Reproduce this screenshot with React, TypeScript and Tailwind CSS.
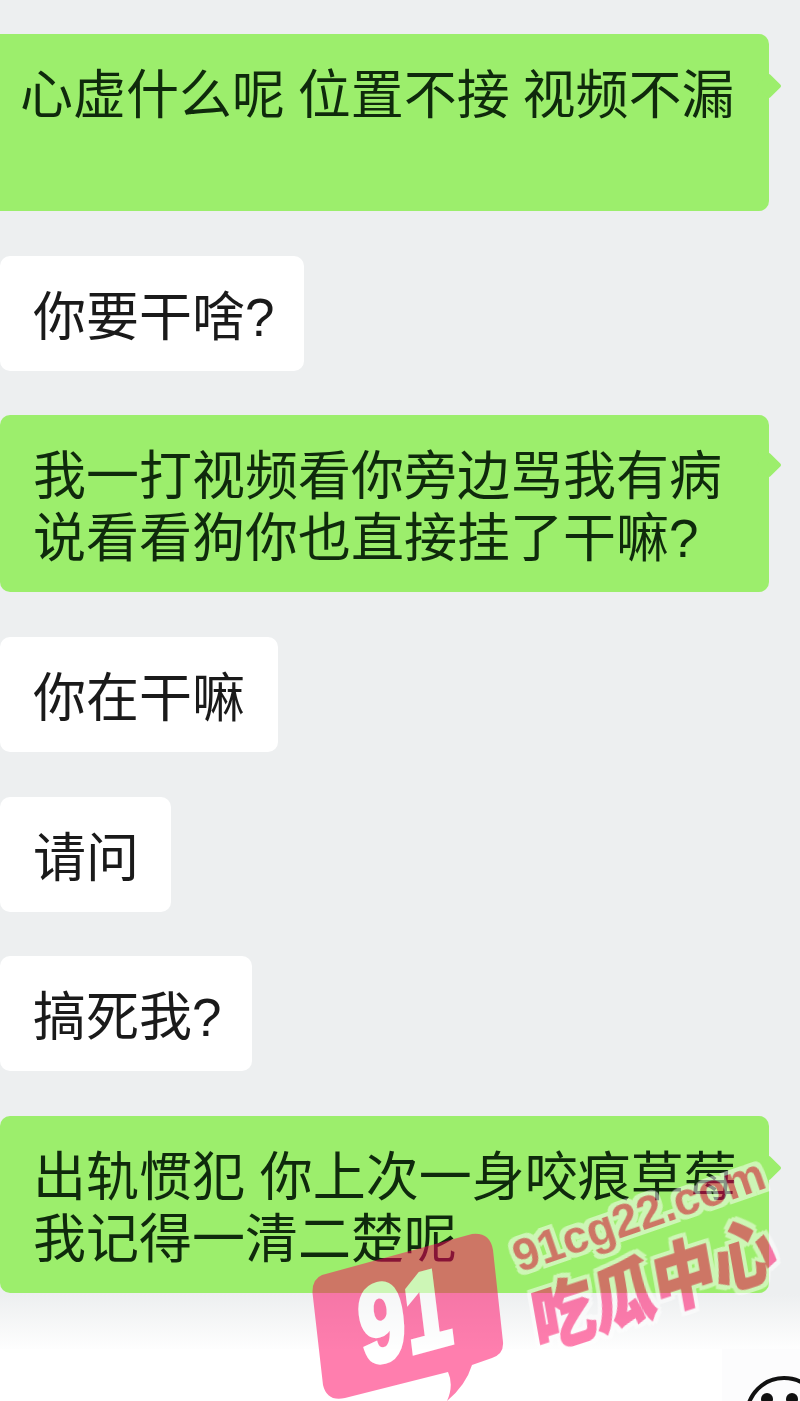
const FONT = "font-['Liberation_Sans','Noto_Sans_CJK_SC',sans-serif]";

function GreenBubble({ lines, tailTop, pad }: { lines: string[]; tailTop: string; pad: string }) {
  return (
    <div className={`relative h-[177px] w-[769px] rounded-r-[10px] bg-[#9cee6c] pt-[31px] text-[#0f2a0c] ${pad}`}>
      {lines.map((line) => (
        <p key={line} className="h-[62px] whitespace-pre leading-[62px]">
          {line}
        </p>
      ))}
      <div className={`absolute left-[760px] h-[18px] w-[18px] rotate-45 rounded-[2px] bg-[#9cee6c] ${tailTop}`} />
    </div>
  );
}

function WhiteBubble({ text, width }: { text: string; width: string }) {
  return (
    <div className={`h-[115px] rounded-[10px] bg-white pt-[31px] pl-[33px] text-[#1a1a1a] ${width}`}>
      <p className="whitespace-pre leading-[62px]">{text}</p>
    </div>
  );
}

function Watermark() {
  return (
    <div className="pointer-events-none absolute inset-0 opacity-50">
      <svg className="absolute inset-0 h-[1401px] w-[800px]" viewBox="0 0 800 1401">
        <path
          d="M322 1275 L472 1234 Q490 1232 493 1250 L503 1342 Q504 1354 492 1358 L472 1365 Q466 1385 447 1401 Q454 1385 448 1372 L345 1398 Q327 1402 323 1385 L312.5 1293 Q312 1279 322 1275 Z"
          fill="#ff0060"
        />
        <text
          transform="translate(364 1366) rotate(-15) skewX(-8) scale(0.78 1)"
          fontFamily="Liberation Sans"
          fontWeight="700"
          fontSize="108"
          stroke="#fff"
          strokeWidth="5"
          fill="#fff"
        >
          91
        </text>
      </svg>
      <span className="absolute top-[1187px] left-[507px] -rotate-[19deg] font-['Liberation_Sans',sans-serif] text-[46px] leading-[56px] font-bold whitespace-nowrap text-[#ff0060] [filter:drop-shadow(4px_0_0_#fff)_drop-shadow(-4px_0_0_#fff)_drop-shadow(0_4px_0_#fff)_drop-shadow(0_-4px_0_#fff)]">
        91cg22.com
      </span>
      <span className="absolute top-[1243px] left-[509px] -rotate-[18deg] scale-x-[0.88] skew-x-[-9deg] font-['Noto_Sans_CJK_SC',sans-serif] text-[72px] leading-[74px] font-black whitespace-nowrap text-[#ff0060] [-webkit-text-stroke:1.5px_#ff0060] [filter:drop-shadow(4px_0_0_#fff)_drop-shadow(-4px_0_0_#fff)_drop-shadow(0_4px_0_#fff)_drop-shadow(0_-4px_0_#fff)]">
        吃瓜中心
      </span>
    </div>
  );
}

export default function App() {
  return (
    <div className={`relative h-[1401px] w-[800px] overflow-hidden bg-[#edeff0] text-[53px] ${FONT}`}>
      <div className="flex flex-col gap-[44.7px] pt-[34px]">
        <GreenBubble lines={["心虚什么呢 位置不接 视频不漏"]} tailTop="top-[43px]" pad="pl-[20px] [word-spacing:-2px]" />
        <WhiteBubble text="你要干啥?" width="w-[304px]" />
        <GreenBubble
          lines={["我一打视频看你旁边骂我有病", "说看看狗你也直接挂了干嘛?"]}
          tailTop="top-[41px]"
          pad="rounded-l-[10px] pl-[33px]"
        />
        <WhiteBubble text="你在干嘛" width="w-[278px]" />
        <WhiteBubble text="请问" width="w-[171px]" />
        <WhiteBubble text="搞死我?" width="w-[252px]" />
        <GreenBubble
          lines={["出轨惯犯 你上次一身咬痕草莓", "我记得一清二楚呢"]}
          tailTop="top-[43px]"
          pad="rounded-l-[10px] pl-[33px]"
        />
      </div>
      <div className="absolute inset-x-0 bottom-0 flex h-[107px] flex-col bg-gradient-to-b from-[#edeff0] to-white to-[55%]">
        <div className="mt-auto flex h-[52px] justify-end overflow-hidden bg-[#fcfcfd]">
          <div className="mr-auto h-full w-[722px] bg-white" />
          <svg className="mt-[27px] mr-[-25px] h-[80px] w-[80px] shrink-0" viewBox="0 0 80 80" fill="none">
            <circle cx="39" cy="39" r="37" stroke="#111" strokeWidth="4" />
            <circle cx="22" cy="23" r="6" fill="#111" />
            <circle cx="47" cy="23" r="6" fill="#111" />
          </svg>
        </div>
      </div>
      <Watermark />
    </div>
  );
}
